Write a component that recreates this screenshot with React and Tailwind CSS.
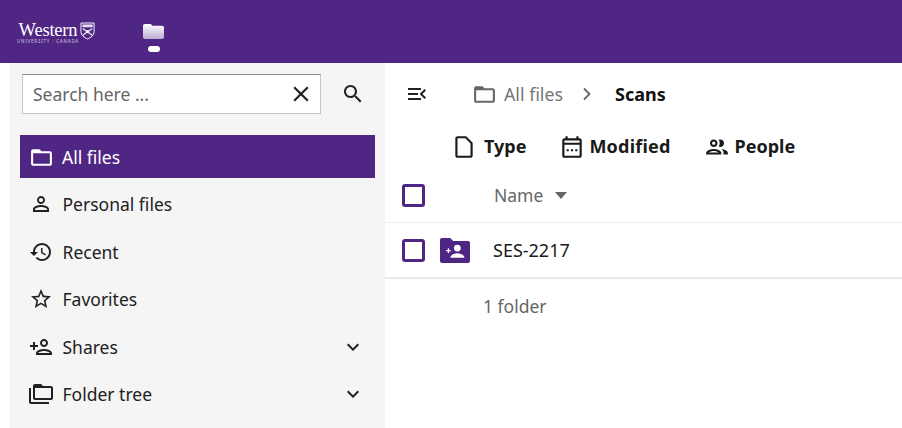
const Icon = ({ d, size = 24, className = "" }) => (
  <svg width={size} height={size} viewBox="0 0 24 24" fill="currentColor" className={"shrink-0 " + className}>
    <path d={d} />
  </svg>
);

const paths = {
  folder: "M20 6h-8l-2-2H4c-1.1 0-1.99.9-1.99 2L2 18c0 1.1.9 2 2 2h16c1.1 0 2-.9 2-2V8c0-1.1-.9-2-2-2zm0 12H4V8h16v10z",
  person: "M12 5.9c1.16 0 2.1.94 2.1 2.1s-.94 2.1-2.1 2.1S9.9 9.16 9.9 8s.94-2.1 2.1-2.1m0 9c2.97 0 6.1 1.46 6.1 2.1v1.1H5.9V17c0-.64 3.13-2.1 6.1-2.1M12 4C9.79 4 8 5.79 8 8s1.79 4 4 4 4-1.79 4-4-1.79-4-4-4zm0 9c-2.67 0-8 1.34-8 4v3h16v-3c0-2.66-5.33-4-8-4z",
  history: "M13 3c-4.97 0-9 4.03-9 9H1l3.89 3.89.07.14L9 12H6c0-3.87 3.13-7 7-7s7 3.13 7 7-3.13 7-7 7c-1.93 0-3.68-.79-4.94-2.06l-1.42 1.42C8.27 19.99 10.51 21 13 21c4.97 0 9-4.03 9-9s-4.03-9-9-9zm-1 5v5l4.28 2.54.72-1.21-3.5-2.08V8H12z",
  star: "M22 9.24l-7.19-.62L12 2 9.19 8.63 2 9.24l5.46 4.73L5.82 21 12 17.27 18.18 21l-1.63-7.03L22 9.24zM12 15.4l-3.76 2.27 1-4.28-3.32-2.88 4.38-.38L12 6.1l1.71 4.04 4.38.38-3.32 2.88 1 4.28L12 15.4z",
  personAdd: "M15 12c2.21 0 4-1.79 4-4s-1.79-4-4-4-4 1.79-4 4 1.79 4 4 4zm0-6c1.1 0 2 .9 2 2s-.9 2-2 2-2-.9-2-2 .9-2 2-2zm0 8c-2.67 0-8 1.34-8 4v2h16v-2c0-2.66-5.33-4-8-4zm-6 4c.22-.72 3.31-2 6-2 2.7 0 5.8 1.29 6 2H9zm-3-3v-3h3v-2H6V7H4v3H1v2h3v3h2z",
  tree: "M2 6H0v14c0 1.1.9 2 2 2h18v-2H2V6zm20-2h-8l-2-2H6c-1.1 0-1.99.9-1.99 2L4 16c0 1.1.9 2 2 2h16c1.1 0 2-.9 2-2V6c0-1.1-.9-2-2-2zm0 12H6V6h16v10z",
  chevron: "M16.59 8.59L12 13.17 7.41 8.59 6 10l6 6 6-6z",
  search: "M15.5 14h-.79l-.28-.27C15.41 12.59 16 11.11 16 9.5 16 5.91 13.09 3 9.5 3S3 5.91 3 9.5 5.91 16 9.5 16c1.61 0 3.09-.59 4.23-1.57l.27.28v.79l5 4.99L20.49 19l-4.99-5zm-6 0C7.01 14 5 11.99 5 9.5S7.01 5 9.5 5 14 7.01 14 9.5 11.99 14 9.5 14z",
  close: "M19 6.41L17.59 5 12 10.59 6.41 5 5 6.41 10.59 12 5 17.59 6.41 19 12 13.41 17.59 19 19 17.59 13.41 12z",
  menuOpen: "M3 18h13v-2H3v2zm0-5h10v-2H3v2zm0-7v2h13V6H3zm18 9.59L17.42 12 21 8.41 19.59 7l-5 5 5 5L21 15.59z",
  file: "M6 2c-1.1 0-2 .9-2 2v16c0 1.1.9 2 2 2h12c1.1 0 2-.9 2-2V8l-6-6H6zm0 2h7.17L18 8.83V20H6V4z",
  calendar: "M19 4h-1V2h-2v2H8V2H6v2H5c-1.1 0-2 .9-2 2v14c0 1.1.9 2 2 2h14c1.1 0 2-.9 2-2V6c0-1.1-.9-2-2-2zm0 16H5V10h14v10zm0-12H5V6h14v2zM7 14h2v2H7zm4 0h2v2h-2zm4 0h2v2h-2z",
  people: "M9 13.75c-2.34 0-7 1.17-7 3.5V19h14v-1.75c0-2.33-4.66-3.5-7-3.5zM4.34 17c.84-.58 2.87-1.25 4.66-1.25s3.82.67 4.66 1.25H4.34zM9 12c1.93 0 3.5-1.57 3.5-3.5S10.93 5 9 5 5.5 6.57 5.5 8.5 7.07 12 9 12zm0-5c.83 0 1.5.67 1.5 1.5S9.83 10 9 10s-1.5-.67-1.5-1.5S8.17 7 9 7zm7.04 6.81c1.16.84 1.96 1.96 1.96 3.44V19h4v-1.75c0-2.02-3.5-3.17-5.96-3.44zM15 12c1.93 0 3.5-1.57 3.5-3.5S16.93 5 15 5c-.54 0-1.04.13-1.5.35.63.89 1 1.98 1 3.15s-.37 2.26-1 3.15c.46.22.96.35 1.5.35z",
};

const navItems = [
  { label: "Personal files", icon: paths.person },
  { label: "Recent", icon: paths.history },
  { label: "Favorites", icon: paths.star },
  { label: "Shares", icon: paths.personAdd, more: true },
  { label: "Folder tree", icon: paths.tree, more: true },
];

const Logo = () => (
  <div className="flex items-start gap-[2px] text-white">
    <div className="flex flex-col items-center w-[60px]">
      <span className="font-['Liberation_Serif',serif] text-[18.5px] leading-[16px] tracking-[-0.2px]">Western</span>
      <span className="mt-[1px] text-[4.5px] leading-[5px] tracking-[0.8px] text-[#d5c8e6] whitespace-nowrap">UNIVERSITY · CANADA</span>
    </div>
    <svg width="15" height="18" viewBox="0 0 16 19">
      <path d="M1 1h14v9c0 4-3.5 6.5-7 8-3.5-1.5-7-4-7-8z" fill="none" stroke="#fff" strokeWidth="1" />
      <path d="M2.5 2.5h11v3h-11z" fill="#e5ddf0" />
      <path d="M3 7l10 7M13 7L3 14" stroke="#d5c8e6" strokeWidth="1.6" />
      <circle cx="8" cy="10" r="1.6" fill="#fff" />
    </svg>
  </div>
);

const Checkbox = () => (
  <span className="block w-[23px] h-[23px] border-[3px] border-[#4f2683] rounded-[3px] bg-white shrink-0" />
);

export default function App() {
  return (
    <div className="w-[902px] h-[428px] overflow-hidden flex flex-col bg-white font-['Noto_Sans',sans-serif] text-[#212121]">
      <header className="h-[63px] shrink-0 bg-[#4f2683] flex items-start">
        <div className="w-[143px] pl-[18px] pt-[22px] shrink-0">
          <Logo />
        </div>
        <div className="flex flex-col items-center pt-[24px] w-[21px]">
          <svg width="21" height="15" viewBox="0 0 22 17" preserveAspectRatio="none">
            <defs>
              <linearGradient id="navFolder" x1="0" y1="0" x2="0" y2="1">
                <stop offset="0" stopColor="#ffffff" />
                <stop offset="1" stopColor="#bcacd4" />
              </linearGradient>
            </defs>
            <path d="M2 0h6l2 2h10c1 0 2 .8 2 2v11c0 1-1 2-2 2H2c-1 0-2-1-2-2V2c0-1 1-2 2-2z" fill="url(#navFolder)" />
          </svg>
          <span className="block w-[12px] h-[6px] mt-[7px] rounded-full bg-white" />
        </div>
      </header>

      <div className="flex flex-1 min-h-0">
        <div className="w-[10px] shrink-0" />
        <aside className="w-[375px] shrink-0 bg-[#f5f5f5] pt-[11px]">
          <div className="flex items-center pl-[12px]">
            <div className="w-[299px] h-[40px] bg-white border border-[#c4c4c4] border-t-[#8a8a8a] flex items-center pl-[10px] pr-[6px]">
              <span className="flex-1 text-[17.5px] text-[#666666]">Search here ...</span>
              <Icon d={paths.close} size={26} className="text-[#212121]" />
            </div>
            <Icon d={paths.search} size={24} className="ml-[20px] text-[#212121]" />
          </div>

          <nav className="mt-[21px] px-[10px]">
            <div className="h-[43px] bg-[#4f2683] text-white flex items-center pl-[9px] gap-[8px] text-[17.5px] pt-[1px]">
              <Icon d={paths.folder} size={25} />
              <span>All files</span>
            </div>
            <ul className="pt-[2.5px]">
              {navItems.map((item) => (
                <li key={item.label} className="h-[47.5px] flex items-center pl-[9px] pr-[10px] gap-[9.5px] text-[17.5px]">
                  <Icon d={item.icon} size={24} className="text-[#212121]" />
                  <span className="flex-1">{item.label}</span>
                  {item.more && <Icon d={paths.chevron} size={24} />}
                </li>
              ))}
            </ul>
          </nav>
        </aside>

        <main className="flex-1 min-w-0">
          <div className="h-[62px] flex items-center pl-[20px]">
            <Icon d={paths.menuOpen} size={24} className="text-[#212121]" />
            <Icon d={paths.folder} size={25} className="ml-[43px] text-[#666666]" />
            <span className="ml-[7px] text-[17.8px] text-[#757575]">All files</span>
            <span className="ml-[12px] w-[24px] flex justify-center text-[#666666]">
              <svg width="10" height="14" viewBox="0 0 10 14" fill="none" stroke="currentColor" strokeWidth="1.8">
                <path d="M2 1.5 7.5 7 2 12.5" />
              </svg>
            </span>
            <span className="ml-[16px] text-[18px] font-bold text-[#111111]">Scans</span>
          </div>

          <div className="h-[43px] flex items-center pl-[66px] text-[18px] font-bold text-[#1a1a1a]">
            <Icon d={paths.file} size={26} />
            <span className="ml-[7px]">Type</span>
            <Icon d={paths.calendar} size={26} className="ml-[33px]" />
            <span className="ml-[4px] tracking-[0.2px]">Modified</span>
            <Icon d={paths.people} size={26} className="ml-[33px]" />
            <span className="ml-[5px]">People</span>
          </div>

          <div className="h-[55px] flex items-center pl-[17px] border-b border-[#eeeeee]">
            <Checkbox />
            <span className="ml-[69px] text-[17.5px] text-[#666666]">Name</span>
            <svg width="12" height="7" viewBox="0 0 12 7" className="ml-[12px]">
              <path d="M0 0h12L6 7z" fill="#666666" />
            </svg>
          </div>

          <div className="h-[56px] flex items-center pl-[17px] border-b-2 border-[#e9e9e9]">
            <Checkbox />
            <svg width="30" height="25" viewBox="0 0 32 26" preserveAspectRatio="none" className="ml-[15px] shrink-0">
              <path d="M2 0h9l3 3h16c1 0 2 1 2 2v19c0 1-1 2-2 2H2c-1 0-2-1-2-2V2C0 1 1 0 2 0z" fill="#4f2683" />
              <circle cx="18.5" cy="10.5" r="3.6" fill="#fff" />
              <path d="M11 20.5c0-3 4.5-4.6 7.5-4.6s7.5 1.6 7.5 4.6z" fill="#fff" />
              <path d="M6.5 12.5h5v1.4h-5zM8.3 10.7h1.4v5H8.3z" fill="#fff" />
            </svg>
            <span className="ml-[23px] text-[18px] text-[#1a1a1a]">SES-2217</span>
          </div>

          <div className="pl-[98px] pt-[14px] text-[17.5px] text-[#666666]">1 folder</div>
        </main>
      </div>
    </div>
  );
}
